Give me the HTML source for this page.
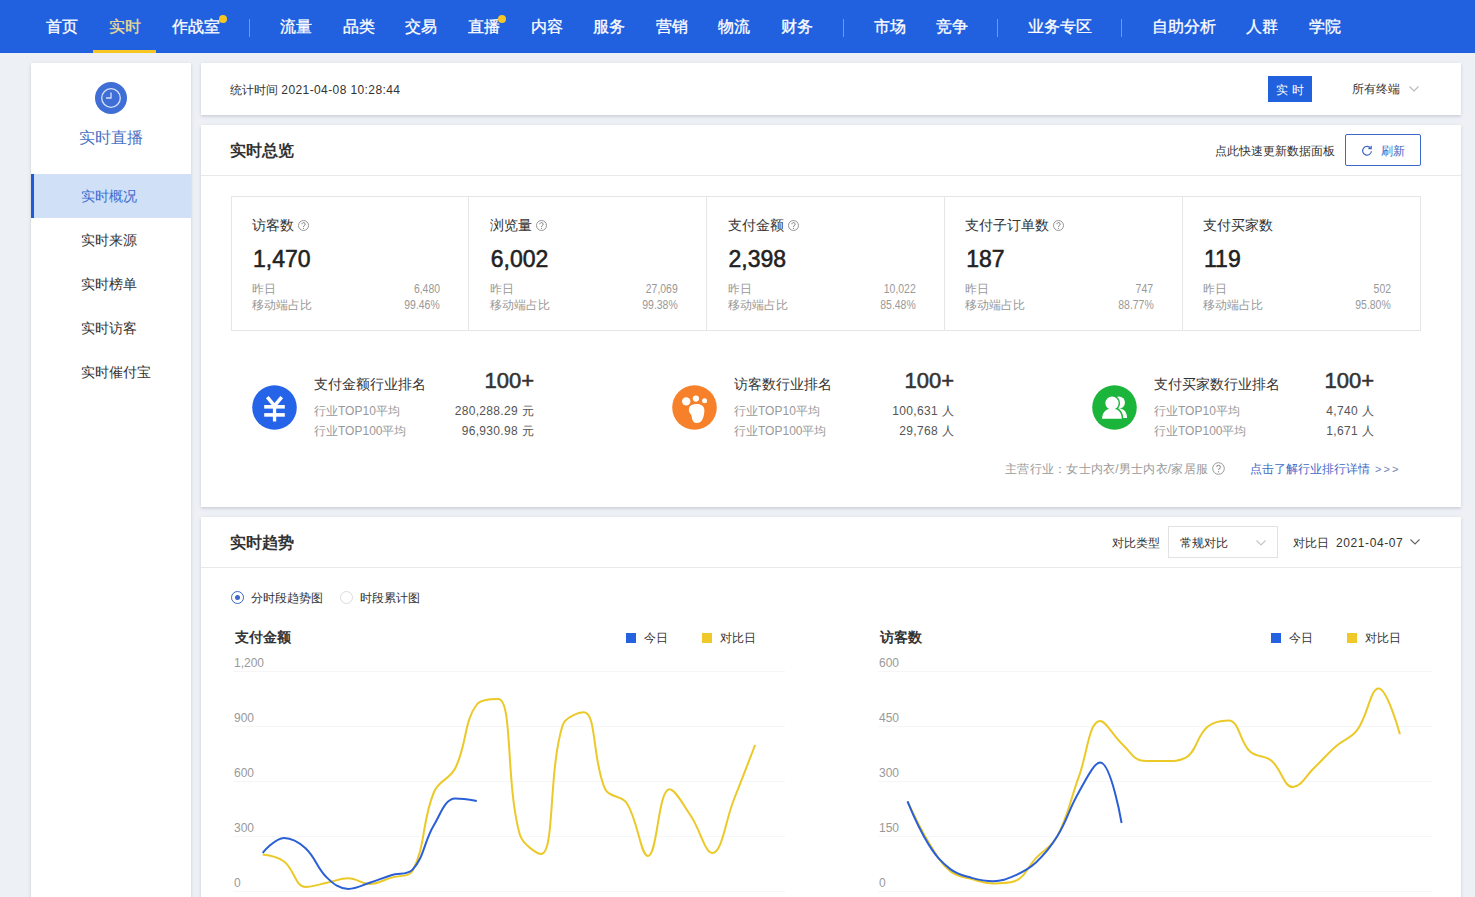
<!DOCTYPE html>
<html><head><meta charset="utf-8">
<style>
*{box-sizing:border-box;margin:0;padding:0}
html,body{width:1475px;height:897px;overflow:hidden}
body{background:#edf0f5;font-family:"Liberation Sans",sans-serif;color:#333;position:relative}
.a{position:absolute;white-space:nowrap}
#nav{position:absolute;left:0;top:0;width:1475px;height:53px;background:#2161df}
#nav .i{position:absolute;top:17px;font-size:16px;line-height:20px;color:#fff;-webkit-text-stroke:.3px currentColor}
#nav .sep{position:absolute;top:19px;width:1px;height:18px;background:rgba(255,255,255,.35)}
#nav .dot{position:absolute;width:8px;height:8px;border-radius:50%;background:#f5c624}
.panel{position:absolute;background:#fff;box-shadow:0 1px 4px rgba(0,10,40,.11),0 2px 2px rgba(0,10,40,.05)}
#side{left:31px;top:63px;width:160px;height:850px}
.menu{position:absolute;left:0;width:160px;height:44px;font-size:14px;line-height:44px;padding-left:50px;color:#333}
.menu.on{background:#cfe0f7;color:#3d6bd0;border-left:3px solid #1f5bd8;padding-left:47px}
.t12{font-size:12px;line-height:16px}
.t14{font-size:14px;line-height:18px}
.q{position:absolute;width:11px;height:11px;border:1px solid #999;border-radius:50%;font-size:8px;line-height:9px;text-align:center;color:#999}
.stat{position:absolute;top:0;height:135px;width:238px;border-right:1px solid #e6e6e6}
.num{font-weight:normal;-webkit-text-stroke:0.55px currentColor;color:#222}
.dnum{transform:scaleX(.87);transform-origin:100% 50%}
.gray{color:#999}
.grid{position:absolute;height:1px;background:#f6f6f6}
.ylab{position:absolute;font-size:12px;line-height:14px;color:#999}
</style></head><body>
<div id="nav">
 <div class="i" style="left:46px">首页</div>
 <div class="i" style="left:109px;color:#ebdc92">实时</div>
 <div style="position:absolute;left:93px;top:50px;width:63px;height:3px;background:#f5c624"></div>
 <div class="i" style="left:172px">作战室</div>
 <div class="dot" style="left:219px;top:15px"></div>
 <div class="sep" style="left:249px"></div>
 <div class="i" style="left:280px">流量</div>
 <div class="i" style="left:343px">品类</div>
 <div class="i" style="left:405px">交易</div>
 <div class="i" style="left:468px">直播</div>
 <div class="dot" style="left:498px;top:15px"></div>
 <div class="i" style="left:531px">内容</div>
 <div class="i" style="left:593px">服务</div>
 <div class="i" style="left:656px">营销</div>
 <div class="i" style="left:718px">物流</div>
 <div class="i" style="left:781px">财务</div>
 <div class="sep" style="left:843px"></div>
 <div class="i" style="left:874px">市场</div>
 <div class="i" style="left:936px">竞争</div>
 <div class="sep" style="left:997px"></div>
 <div class="i" style="left:1028px">业务专区</div>
 <div class="sep" style="left:1121px"></div>
 <div class="i" style="left:1152px">自助分析</div>
 <div class="i" style="left:1246px">人群</div>
 <div class="i" style="left:1309px">学院</div>
</div>

<div class="panel" id="side">
 <div style="position:absolute;left:64px;top:19px;width:32px;height:32px;border-radius:50%;background:#3f6fd6">
  <svg width="32" height="32" viewBox="0 0 32 32" style="position:absolute;left:0;top:0">
   <circle cx="16" cy="16" r="9.3" fill="none" stroke="#d6e2f8" stroke-width="1.3"/>
   <path d="M16 10.5V16H11" fill="none" stroke="#d6e2f8" stroke-width="1.3"/>
  </svg>
 </div>
 <div class="a" style="left:48px;top:65px;font-size:16px;line-height:20px;color:#4a72c4">实时直播</div>
 <div class="menu on" style="top:111px">实时概况</div>
 <div class="menu" style="top:155px">实时来源</div>
 <div class="menu" style="top:199px">实时榜单</div>
 <div class="menu" style="top:243px">实时访客</div>
 <div class="menu" style="top:287px">实时催付宝</div>
</div>

<!-- panel 1 -->
<div class="panel" style="left:201px;top:63px;width:1260px;height:52px">
 <div class="a t12" style="left:29px;top:19px;color:#333">统计时间 <span style="letter-spacing:.4px">2021-04-08 10:28:44</span></div>
 <div class="a" style="left:1067px;top:13px;width:44px;height:26px;background:#2161dd;color:#fff;font-size:12px;line-height:28px;text-align:center;letter-spacing:4px;padding-left:4px">实时</div>
 <div class="a t12" style="left:1151px;top:18px;color:#333">所有终端</div>
 <svg class="a" style="left:1207px;top:22px" width="12" height="8" viewBox="0 0 12 8"><path d="M1.5 1.5L6 6L10.5 1.5" fill="none" stroke="#bbb" stroke-width="1.2"/></svg>
</div>

<!-- panel 2 -->
<div class="panel" style="left:201px;top:125px;width:1260px;height:382px">
 <div class="a" style="left:29px;top:15px;font-size:16px;line-height:22px;font-weight:bold;color:#333">实时总览</div>
 <div class="a t12" style="left:1014px;top:18px;color:#333">点此快速更新数据面板</div>
 <div class="a" style="left:1144px;top:9px;width:76px;height:32px;border:1px solid #3d68c8;border-radius:2px">
  <svg class="a" style="left:15px;top:10px" width="12" height="12" viewBox="0 0 12 12"><path d="M9.6 3.2A4.4 4.4 0 1 0 10.4 6.2" fill="none" stroke="#3d68c8" stroke-width="1.2"/><path d="M10.2 0.8V3.6H7.4" fill="none" stroke="#3d68c8" stroke-width="1.2"/></svg>
  <div class="a t12" style="left:35px;top:8px;color:#3d68c8">刷新</div>
 </div>
 <div style="position:absolute;left:0;top:50px;width:1260px;height:1px;background:#e8e8e8"></div>

 <div style="position:absolute;left:30px;top:71px;width:1190px;height:135px;border:1px solid #e6e6e6">
  <div style="position:absolute;left:236px;top:0;width:1px;height:133px;background:#e6e6e6"></div><div class="stat" style="left:0.0px;border-right:none;"><div class="a t14" style="left:20px;top:19px;color:#333">访客数</div><svg class="a" style="left:66px;top:220px;top:23px" width="11" height="11" viewBox="0 0 11 11"><circle cx="5.5" cy="5.5" r="5" fill="none" stroke="#8a8a8a" stroke-width=".9"/><path d="M3.9 4.2a1.6 1.6 0 1 1 2.5 1.3c-.6.4-.9.7-.9 1.4" fill="none" stroke="#7a7a7a" stroke-width="1"/><circle cx="5.5" cy="8.3" r=".6" fill="#7a7a7a"/></svg><div class="a num" style="left:21px;top:48px;font-size:23px;line-height:28px">1,470</div><div class="a t12 gray" style="left:20px;top:84px">昨日</div><div class="a t12 gray" style="left:20px;top:100px">移动端占比</div><div class="a t12 gray dnum" style="right:30px;top:84px;text-align:right">6,480</div><div class="a t12 gray dnum" style="right:30px;top:100px;text-align:right">99.46%</div></div><div style="position:absolute;left:474px;top:0;width:1px;height:133px;background:#e6e6e6"></div><div class="stat" style="left:237.75px;border-right:none;"><div class="a t14" style="left:20px;top:19px;color:#333">浏览量</div><svg class="a" style="left:66px;top:220px;top:23px" width="11" height="11" viewBox="0 0 11 11"><circle cx="5.5" cy="5.5" r="5" fill="none" stroke="#8a8a8a" stroke-width=".9"/><path d="M3.9 4.2a1.6 1.6 0 1 1 2.5 1.3c-.6.4-.9.7-.9 1.4" fill="none" stroke="#7a7a7a" stroke-width="1"/><circle cx="5.5" cy="8.3" r=".6" fill="#7a7a7a"/></svg><div class="a num" style="left:21px;top:48px;font-size:23px;line-height:28px">6,002</div><div class="a t12 gray" style="left:20px;top:84px">昨日</div><div class="a t12 gray" style="left:20px;top:100px">移动端占比</div><div class="a t12 gray dnum" style="right:30px;top:84px;text-align:right">27,069</div><div class="a t12 gray dnum" style="right:30px;top:100px;text-align:right">99.38%</div></div><div style="position:absolute;left:712px;top:0;width:1px;height:133px;background:#e6e6e6"></div><div class="stat" style="left:475.5px;border-right:none;"><div class="a t14" style="left:20px;top:19px;color:#333">支付金额</div><svg class="a" style="left:80px;top:220px;top:23px" width="11" height="11" viewBox="0 0 11 11"><circle cx="5.5" cy="5.5" r="5" fill="none" stroke="#8a8a8a" stroke-width=".9"/><path d="M3.9 4.2a1.6 1.6 0 1 1 2.5 1.3c-.6.4-.9.7-.9 1.4" fill="none" stroke="#7a7a7a" stroke-width="1"/><circle cx="5.5" cy="8.3" r=".6" fill="#7a7a7a"/></svg><div class="a num" style="left:21px;top:48px;font-size:23px;line-height:28px">2,398</div><div class="a t12 gray" style="left:20px;top:84px">昨日</div><div class="a t12 gray" style="left:20px;top:100px">移动端占比</div><div class="a t12 gray dnum" style="right:30px;top:84px;text-align:right">10,022</div><div class="a t12 gray dnum" style="right:30px;top:100px;text-align:right">85.48%</div></div><div style="position:absolute;left:950px;top:0;width:1px;height:133px;background:#e6e6e6"></div><div class="stat" style="left:713.25px;border-right:none;"><div class="a t14" style="left:20px;top:19px;color:#333">支付子订单数</div><svg class="a" style="left:108px;top:220px;top:23px" width="11" height="11" viewBox="0 0 11 11"><circle cx="5.5" cy="5.5" r="5" fill="none" stroke="#8a8a8a" stroke-width=".9"/><path d="M3.9 4.2a1.6 1.6 0 1 1 2.5 1.3c-.6.4-.9.7-.9 1.4" fill="none" stroke="#7a7a7a" stroke-width="1"/><circle cx="5.5" cy="8.3" r=".6" fill="#7a7a7a"/></svg><div class="a num" style="left:21px;top:48px;font-size:23px;line-height:28px">187</div><div class="a t12 gray" style="left:20px;top:84px">昨日</div><div class="a t12 gray" style="left:20px;top:100px">移动端占比</div><div class="a t12 gray dnum" style="right:30px;top:84px;text-align:right">747</div><div class="a t12 gray dnum" style="right:30px;top:100px;text-align:right">88.77%</div></div><div class="stat" style="left:951.0px;border-right:none;"><div class="a t14" style="left:20px;top:19px;color:#333">支付买家数</div><div class="a num" style="left:21px;top:48px;font-size:23px;line-height:28px">119</div><div class="a t12 gray" style="left:20px;top:84px">昨日</div><div class="a t12 gray" style="left:20px;top:100px">移动端占比</div><div class="a t12 gray dnum" style="right:30px;top:84px;text-align:right">502</div><div class="a t12 gray dnum" style="right:30px;top:100px;text-align:right">95.80%</div></div>
 </div>

 <svg class="a" style="left:51px;top:260px" width="45" height="45" viewBox="0 0 45 45"><circle cx="22.5" cy="22.5" r="22.3" fill="#2563e8"/><path d="M15.3 12.2L22.5 20.8L29.7 12.2" fill="none" stroke="#fff" stroke-width="3.6"/><rect x="12.2" y="20" width="20.6" height="3.6" fill="#fff"/><rect x="12.2" y="28.1" width="20.6" height="3.6" fill="#fff"/><rect x="20.9" y="20" width="3.3" height="16.5" fill="#fff"/></svg><div class="a t14" style="left:113px;top:250px;color:#333">支付金额行业排名</div><div class="a num" style="left:113px;width:220px;text-align:right;top:243px;font-size:22px;line-height:26px;color:#333">100+</div><div class="a t12 gray" style="left:113px;top:278px">行业TOP10平均</div><div class="a t12 gray" style="left:113px;top:298px">行业TOP100平均</div><div class="a t12" style="left:113px;width:220px;text-align:right;top:278px;color:#555;letter-spacing:.33px">280,288.29 元</div><div class="a t12" style="left:113px;width:220px;text-align:right;top:298px;color:#555;letter-spacing:.33px">96,930.98 元</div><svg class="a" style="left:471px;top:260px" width="45" height="45" viewBox="0 0 45 45"><circle cx="22.5" cy="22.5" r="22.3" fill="#f7802a"/><circle cx="14.2" cy="16.4" r="4.2" fill="#fff"/><circle cx="23.9" cy="13.6" r="3.1" fill="#fff"/><circle cx="32.6" cy="15.8" r="2.5" fill="#fff"/><path d="M24.2 18.9C28.5 18.9 32.5 20.5 32.4 25.5C32.3 30 31 34.5 29 36.5C27.5 38 25.5 38 24.2 38C21.5 38 20.3 35 19.8 32.5C19.5 30.5 19.3 29.8 18.5 29C17 27.5 16.5 25 17.2 22.8C18 20 21 18.9 24.2 18.9Z" fill="#fff"/></svg><div class="a t14" style="left:533px;top:250px;color:#333">访客数行业排名</div><div class="a num" style="left:533px;width:220px;text-align:right;top:243px;font-size:22px;line-height:26px;color:#333">100+</div><div class="a t12 gray" style="left:533px;top:278px">行业TOP10平均</div><div class="a t12 gray" style="left:533px;top:298px">行业TOP100平均</div><div class="a t12" style="left:533px;width:220px;text-align:right;top:278px;color:#555;letter-spacing:.33px">100,631 人</div><div class="a t12" style="left:533px;width:220px;text-align:right;top:298px;color:#555;letter-spacing:.33px">29,768 人</div><svg class="a" style="left:891px;top:260px" width="45" height="45" viewBox="0 0 45 45"><circle cx="22.5" cy="22.5" r="22.3" fill="#1cb53c"/><circle cx="26.8" cy="17.6" r="6.2" fill="#fff"/><path d="M17 33.1C18 27 22 23.6 27 23.6C32 23.6 34.8 27 35.1 33.1Z" fill="#fff"/><g stroke="#1cb53c" stroke-width="3"><path d="M10 33.7C10.5 27 14 23.8 20 23.8C26 23.8 29.5 27 29.8 33.7Z" fill="#fff"/><circle cx="20" cy="18.2" r="6.6" fill="#fff"/></g><path d="M10 33.7C10.5 27 14 23.8 20 23.8C26 23.8 29.5 27 29.8 33.7Z" fill="#fff"/><circle cx="20" cy="18.2" r="6.6" fill="#fff"/></svg><div class="a t14" style="left:953px;top:250px;color:#333">支付买家数行业排名</div><div class="a num" style="left:953px;width:220px;text-align:right;top:243px;font-size:22px;line-height:26px;color:#333">100+</div><div class="a t12 gray" style="left:953px;top:278px">行业TOP10平均</div><div class="a t12 gray" style="left:953px;top:298px">行业TOP100平均</div><div class="a t12" style="left:953px;width:220px;text-align:right;top:278px;color:#555;letter-spacing:.33px">4,740 人</div><div class="a t12" style="left:953px;width:220px;text-align:right;top:298px;color:#555;letter-spacing:.33px">1,671 人</div>

 <div class="a t12" style="left:804px;top:336px;color:#999;letter-spacing:.25px">主营行业：女士内衣/男士内衣/家居服</div>
 <svg class="a" style="left:1011px;top:337px" width="13" height="13" viewBox="0 0 13 13"><circle cx="6.5" cy="6.5" r="5.8" fill="none" stroke="#999" stroke-width="1"/><path d="M4.7 5a1.8 1.8 0 1 1 2.8 1.5c-.7.4-1 .8-1 1.6" fill="none" stroke="#999" stroke-width="1.1"/><circle cx="6.5" cy="9.8" r=".7" fill="#999"/></svg>
 <div class="a t12" style="left:1049px;top:336px;color:#3d68c8">点击了解行业排行详情</div><div class="a" style="left:1174px;top:336px;color:#6f82b4;font-size:11px;line-height:16px;word-spacing:-1px">&gt; &gt; &gt;</div>
</div>

<!-- panel 3 -->
<div class="panel" style="left:201px;top:517px;width:1260px;height:400px">
 <div class="a" style="left:29px;top:15px;font-size:16px;line-height:22px;font-weight:bold;color:#333">实时趋势</div>
 <div class="a t12" style="left:911px;top:18px;color:#333">对比类型</div>
 <div class="a" style="left:967px;top:9px;width:110px;height:32px;border:1px solid #e2e2e2">
  <div class="a t12" style="left:11px;top:8px;color:#333">常规对比</div>
  <svg class="a" style="left:86px;top:12px" width="12" height="8" viewBox="0 0 12 8"><path d="M1.5 1.5L6 6L10.5 1.5" fill="none" stroke="#c4c4c4" stroke-width="1.1"/></svg>
 </div>
 <div class="a t12" style="left:1092px;top:18px;color:#333">对比日</div>
 <div class="a t12" style="left:1135px;top:18px;color:#333;letter-spacing:.6px">2021-04-07</div>
 <svg class="a" style="left:1208px;top:21px" width="12" height="8" viewBox="0 0 12 8"><path d="M1.5 1.5L6 6L10.5 1.5" fill="none" stroke="#666" stroke-width="1.2"/></svg>
 <div style="position:absolute;left:0;top:50px;width:1260px;height:1px;background:#e8e8e8"></div>
 <div class="a" style="left:30px;top:74px;width:13px;height:13px;border:1px solid #3d68c8;border-radius:50%"><div style="position:absolute;left:3px;top:3px;width:5px;height:5px;border-radius:50%;background:#3d68c8"></div></div>
 <div class="a t12" style="left:50px;top:73px;color:#333">分时段趋势图</div>
 <div class="a" style="left:139px;top:74px;width:13px;height:13px;border:1px solid #ddd;border-radius:50%"></div>
 <div class="a t12" style="left:159px;top:73px;color:#333">时段累计图</div>
</div>
<div class="a" style="left:235px;top:628px;font-size:14px;line-height:18px;font-weight:bold;color:#333">支付金额</div>
<div class="a" style="left:626px;top:633px;width:10px;height:10px;background:#2462e0"></div>
<div class="a t12" style="left:644px;top:630px;color:#333">今日</div>
<div class="a" style="left:702px;top:633px;width:10px;height:10px;background:#f0c829"></div>
<div class="a t12" style="left:720px;top:630px;color:#333">对比日</div>
<div class="grid" style="left:233px;top:671px;width:552px"></div>
<div class="ylab" style="left:234px;top:656px">1,200</div>
<div class="grid" style="left:233px;top:726px;width:552px"></div>
<div class="ylab" style="left:234px;top:711px">900</div>
<div class="grid" style="left:233px;top:781px;width:552px"></div>
<div class="ylab" style="left:234px;top:766px">600</div>
<div class="grid" style="left:233px;top:836px;width:552px"></div>
<div class="ylab" style="left:234px;top:821px">300</div>
<div class="grid" style="left:233px;top:891px;width:552px"></div>
<div class="ylab" style="left:234px;top:876px">0</div>
<div class="a" style="left:880px;top:628px;font-size:14px;line-height:18px;font-weight:bold;color:#333">访客数</div>
<div class="a" style="left:1271px;top:633px;width:10px;height:10px;background:#2462e0"></div>
<div class="a t12" style="left:1289px;top:630px;color:#333">今日</div>
<div class="a" style="left:1347px;top:633px;width:10px;height:10px;background:#f0c829"></div>
<div class="a t12" style="left:1365px;top:630px;color:#333">对比日</div>
<div class="grid" style="left:878px;top:671px;width:554px"></div>
<div class="ylab" style="left:879px;top:656px">600</div>
<div class="grid" style="left:878px;top:726px;width:554px"></div>
<div class="ylab" style="left:879px;top:711px">450</div>
<div class="grid" style="left:878px;top:781px;width:554px"></div>
<div class="ylab" style="left:879px;top:766px">300</div>
<div class="grid" style="left:878px;top:836px;width:554px"></div>
<div class="ylab" style="left:879px;top:821px">150</div>
<div class="grid" style="left:878px;top:891px;width:554px"></div>
<div class="ylab" style="left:879px;top:876px">0</div>
<svg class="a" style="left:0;top:0" width="1475" height="897" viewBox="0 0 1475 897"><path d="M262.70 854.60C262.70 854.60 277.19 856.28 284.11 861.50C294.32 869.20 295.18 886.90 305.52 886.90C312.31 886.90 318.39 884.54 326.93 882.80C335.51 881.06 339.83 878.20 348.34 878.20C356.96 878.20 361.22 884.00 369.75 884.00C378.35 884.00 382.62 880.25 391.16 877.60C399.75 874.93 408.87 877.60 412.57 870.70C426.00 845.68 421.70 821.46 433.98 792.00C438.82 780.38 449.84 779.35 455.39 768.00C466.96 744.35 463.92 721.17 476.80 704.50C481.05 699.00 495.83 699.00 498.21 699.00C512.95 699.00 505.52 782.94 519.62 834.00C522.64 844.94 537.88 854.00 541.03 854.00C555.01 854.00 548.10 773.16 562.44 725.70C565.23 716.48 579.74 712.30 583.85 712.30C596.86 712.30 592.26 761.77 605.26 789.30C609.39 798.05 621.40 794.79 626.67 803.00C638.53 821.47 640.38 856.00 648.08 856.00C657.51 856.00 657.98 789.30 669.49 789.30C675.11 789.30 683.28 804.67 690.90 816.00C700.41 830.15 704.98 853.00 712.31 853.00C722.11 853.00 725.29 821.25 733.72 800.00C742.42 778.05 755.13 745.00 755.13 745.00" fill="none" stroke="#ebc928" stroke-width="2"/><path d="M262.70 852.80C262.70 852.80 275.15 837.90 284.11 837.90C292.27 837.90 298.75 841.93 305.52 848.20C315.88 857.81 316.65 867.83 326.93 877.60C333.77 884.11 339.42 888.90 348.34 888.90C356.55 888.90 361.27 885.49 369.75 882.80C378.39 880.05 382.49 877.97 391.16 875.30C399.62 872.69 407.27 875.30 412.57 869.60C424.40 856.87 423.83 841.83 433.98 825.00C440.96 813.43 444.91 798.60 455.39 798.60C462.03 798.60 476.80 801.00 476.80 801.00" fill="none" stroke="#2a5fd6" stroke-width="2"/><path d="M907.50 801.40C907.50 801.40 919.22 826.89 928.91 842.70C936.35 854.85 939.86 862.43 950.32 871.30C956.98 876.95 962.99 876.53 971.73 879.00C980.12 881.37 984.51 883.40 993.14 883.40C1001.64 883.40 1007.60 883.40 1014.55 881.20C1024.72 877.98 1027.29 867.24 1035.96 858.10C1044.41 849.20 1051.76 846.75 1057.37 836.10C1068.88 814.27 1070.01 800.50 1078.78 776.90C1087.14 754.42 1088.91 720.90 1100.19 720.90C1106.04 720.90 1112.52 734.96 1121.60 743.40C1129.65 750.88 1133.38 760.19 1143.01 760.70C1150.50 761.10 1155.91 761.10 1164.42 761.10C1173.04 761.10 1179.53 761.10 1185.83 757.60C1196.66 751.59 1196.54 736.35 1207.24 727.10C1213.67 721.55 1222.26 720.60 1228.65 720.60C1239.39 720.60 1239.49 741.60 1250.06 751.50C1256.61 757.64 1264.50 754.91 1271.47 760.70C1281.63 769.15 1283.61 787.10 1292.88 787.10C1300.74 787.10 1305.94 775.74 1314.29 767.80C1323.06 759.46 1326.62 754.37 1335.70 746.40C1343.75 739.33 1350.87 738.63 1357.11 730.20C1368.00 715.47 1370.27 688.50 1378.52 688.50C1387.40 688.50 1399.93 734.20 1399.93 734.20" fill="none" stroke="#ebc928" stroke-width="2"/><path d="M907.50 801.40C907.50 801.40 918.63 828.65 928.91 844.90C935.76 855.73 940.34 861.41 950.32 869.10C957.47 874.61 962.88 875.40 971.73 877.90C980.01 880.24 984.66 881.20 993.14 881.20C1001.79 881.20 1006.54 879.20 1014.55 875.70C1023.67 871.72 1028.68 869.24 1035.96 862.50C1045.80 853.40 1050.34 847.64 1057.37 836.10C1067.47 819.52 1068.98 809.02 1078.78 792.20C1086.11 779.62 1093.97 762.60 1100.19 762.60C1111.10 762.60 1121.60 823.00 1121.60 823.00" fill="none" stroke="#2a5fd6" stroke-width="2"/></svg>
</body></html>
